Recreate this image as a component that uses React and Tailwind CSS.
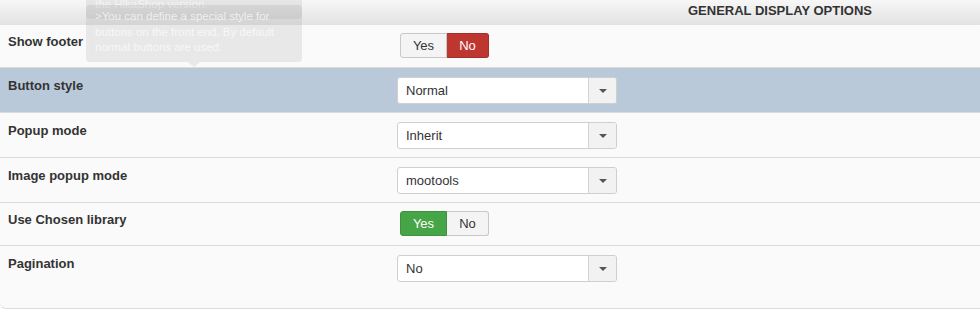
import React from "react";

function Toggle({ value, color }) {
  const yesActive = value === "Yes";
  return (
    <div className="flex h-[25px] text-[13px]">
      <div
        className={
          "flex w-[47px] items-center justify-center rounded-l-[3px] border " +
          (yesActive
            ? color === "green"
              ? "border-[#3f8f3f] bg-[#46a546] text-white"
              : "border-[#a52f29] bg-[#bd362f] text-white"
            : "border-[#c8c8c8] bg-[#f4f4f4] text-[#333]")
        }
      >
        Yes
      </div>
      <div
        className={
          "flex w-[42px] items-center justify-center rounded-r-[3px] border border-l-0 " +
          (!yesActive
            ? "border-[#a52f29] bg-[#bd362f] text-white"
            : "border-[#c8c8c8] bg-[#f4f4f4] text-[#333]")
        }
      >
        No
      </div>
    </div>
  );
}

function Select({ value }) {
  return (
    <div className="flex h-[27px] w-[220px] rounded-[3px] border border-[#cfcfcf] bg-white text-[13px] text-[#333]">
      <div className="flex flex-1 items-center pl-[8px]">{value}</div>
      <div className="flex w-[28px] items-center justify-center border-l border-[#d4d4d4] bg-[#f2f2f2] rounded-r-[3px]">
        <svg width="8" height="4" viewBox="0 0 8 4">
          <path d="M0 0 L8 0 L4 4 Z" fill="#555" />
        </svg>
      </div>
    </div>
  );
}

function Row({ label, children, highlight, pt = "pt-[9px]", pb = "pb-[8px]", last }) {
  return (
    <div
      className={
        "flex border-b border-[#dcdcdc] " +
        (highlight ? "bg-[#b9c9da] " : "bg-[#fafafa] ") +
        pt +
        " " +
        pb +
        (last ? " rounded-bl-[6px]" : "")
      }
    >
      <div className="w-[397px] pl-[8px] pt-[1px] text-[13px] font-bold leading-[16px] text-[#333]">
        {label}
      </div>
      <div>{children}</div>
    </div>
  );
}

export default function App() {
  return (
    <div
      className="relative h-[317px] w-[980px] overflow-hidden bg-white"
      style={{ fontFamily: '"Liberation Sans", Arial, sans-serif' }}
    >
      <div className="h-[25px] bg-gradient-to-b from-[#f7f7f7] to-[#e2e2e2] pl-[688px] pt-[4px] text-[13px] font-bold leading-[14px] text-[#333]">
        GENERAL DISPLAY OPTIONS
      </div>
      <div>
        <Row label="Show footer" pt="pt-[8px]" pb="pb-[9px]">
          <div className="pl-[3px]">
            <Toggle value="No" />
          </div>
        </Row>
        <Row label="Button style" highlight>
          <Select value="Normal" />
        </Row>
        <Row label="Popup mode">
          <Select value="Inherit" />
        </Row>
        <Row label="Image popup mode">
          <Select value="mootools" />
        </Row>
        <Row label="Use Chosen library" pt="pt-[8px]" pb="pb-[9px]">
          <div className="pl-[3px]">
            <Toggle value="Yes" color="green" />
          </div>
        </Row>
        <Row label="Pagination" pb="pb-[26px]" last>
          <Select value="No" />
        </Row>
      </div>

      {/* fading tooltips */}
      <div className="absolute left-[86px] top-[-44px] h-[63px] w-[216px] rounded-[4px] bg-[rgba(120,120,120,0.13)] px-[9px] pt-[41px] text-[11.5px] leading-[15px] text-[rgba(255,255,255,0.6)]">
        the HikaShop version.
      </div>
      <div className="absolute left-[86px] top-[5px] h-[57px] w-[216px] rounded-[4px] bg-[rgba(150,150,150,0.18)] px-[9px] pt-[4px] text-[11.5px] leading-[15.5px] text-[rgba(255,255,255,0.7)] whitespace-nowrap">
        &gt;You can define a special style for
        <br />
        buttons on the front end. By default
        <br />
        normal buttons are used.
      </div>
      <div className="absolute left-[188px] top-[62px] h-0 w-0 border-x-[6px] border-t-[5px] border-x-transparent border-t-[rgba(150,150,150,0.18)]" />
    </div>
  );
}
